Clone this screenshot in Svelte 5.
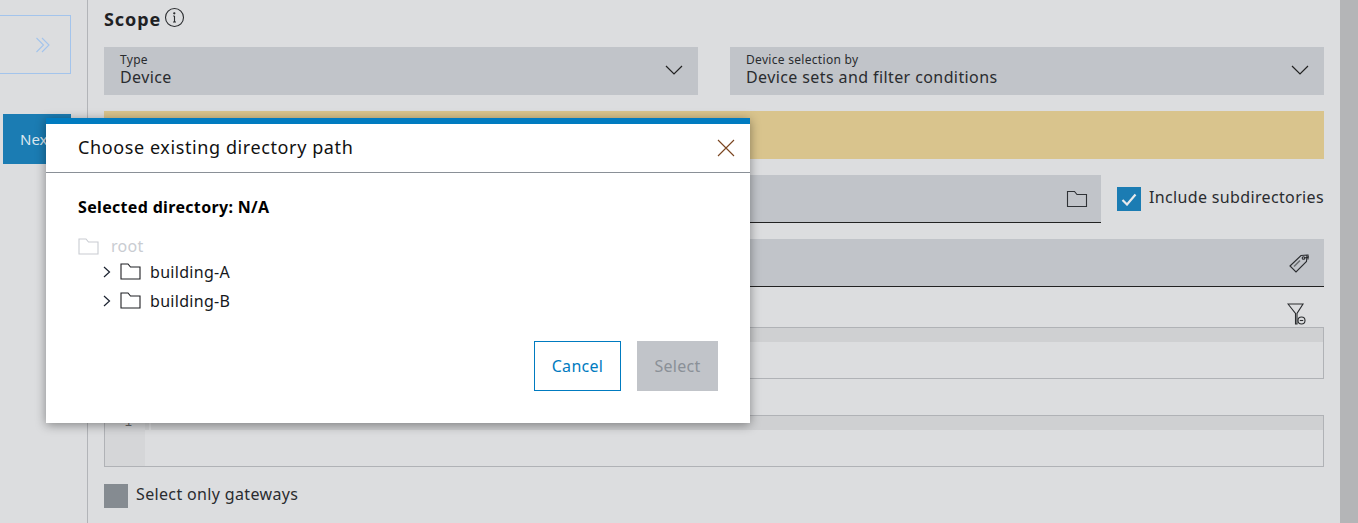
<script>
  const nodes = ['building-A', 'building-B'];
</script>

<div class="page">
  <aside class="side">
    <button class="expand" aria-label="Expand">
      <svg width="16" height="16" viewBox="0 0 16 16" fill="none" stroke="#a3c4ec" stroke-width="1.1"><path d="M1.500 1 8.500 8l-7 7M7 1l7 7-7 7"/></svg>
    </button>
    <button class="next">Next</button>
  </aside>

  <main class="main">
    <div class="content">
      <div class="title">
        <h2>Scope</h2>
        <svg class="info" width="21" height="21" viewBox="0 0 21 21" fill="none" stroke="#2a2c2f" stroke-width="1.100"><circle cx="10.500" cy="10.500" r="9"/><path d="M10.500 9v6M9 15h3M9.200 9h1.300"/><circle cx="10.300" cy="6.300" r=".6" fill="#2a2c2f"/></svg>
      </div>

      <div class="two">
        <div class="select">
          <div class="stack"><div class="lab">Type</div><div class="val">Device</div></div>
          <svg class="chev" width="18" height="10" viewBox="0 0 18 10" fill="none" stroke="#222" stroke-width="1.200"><path d="M1 1l8 8 8-8"/></svg>
        </div>
        <div class="select">
          <div class="stack"><div class="lab">Device selection by</div><div class="val">Device sets and filter conditions</div></div>
          <svg class="chev" width="18" height="10" viewBox="0 0 18 10" fill="none" stroke="#222" stroke-width="1.200"><path d="M1 1l8 8 8-8"/></svg>
        </div>
      </div>

      <div class="banner"></div>

      <div class="dirrow">
        <div class="input dir">
          <svg width="22" height="18" viewBox="0 0 22 18" fill="none" stroke="#2f3236" stroke-width="1.100"><path d="M1.500 16.500V1.500h7l2.500 3h9.500v12z"/></svg>
        </div>
        <label class="check">
          <span class="box"><svg width="16" height="13" viewBox="0 0 16 13" fill="none" stroke="#e8eaec" stroke-width="2.200"><path d="M1.500 7l4.500 4.500 8.500-10"/></svg></span>
          <span class="txt">Include subdirectories</span>
        </label>
      </div>

      <div class="input tag">
        <svg width="22" height="20" viewBox="0 0 22 20" fill="none" stroke="#2a2c2f" stroke-width="1.100"><path d="M1 13 12 2.500l6-.5-.5 6.500L7 19z"/><path d="M5 13.500l6-6" stroke="#6b6e72" stroke-width="1.600"/><circle cx="14.500" cy="5" r="1.300"/><path d="M15 5l5-1M19 1.500v5" /></svg>
      </div>

      <div class="filter">
        <svg width="20" height="23" viewBox="0 0 20 23" fill="none" stroke="#2a2c2f" stroke-width="1.100"><path d="M1 1h15l-6 9.500V21H8.500V10.500z"/><circle cx="14.500" cy="17.500" r="3.500" fill="#dcdddf"/><path d="M12.800 17.500h3.400"/></svg>
      </div>

      <div class="code first"><div class="codeline"></div></div>

      <div class="code second">
        <div class="gutter"><span>1</span></div>
        <div class="codeline"><span class="cursor"></span></div>
      </div>

      <label class="gate"><span class="off"></span><span class="txt">Select only gateways</span></label>
    </div>
    <div class="scroll"></div>
  </main>
</div>

<div class="modal">
  <header>
    <h3>Choose existing directory path</h3>
    <svg width="18" height="18" viewBox="0 0 18 18" stroke="#7a4520" stroke-width="1.100" fill="none"><path d="M1 1l16 16M17 1 1 17"/></svg>
  </header>
  <div class="body">
    <p class="sel">Selected directory: N/A</p>
    <div class="root">
      <svg width="21" height="17" viewBox="0 0 21 17" fill="none" stroke="#c9ccd2" stroke-width="1.100"><path d="M1 16V1h7l2.500 3h9.500v12z"/></svg>
      <span>root</span>
    </div>
    {#each nodes as n}
      <div class="node">
        <svg class="arrow" width="8" height="12" viewBox="0 0 8 12" fill="none" stroke="#1b2230" stroke-width="1.200"><path d="M1 1l5.500 5L1 11"/></svg>
        <svg width="21" height="17" viewBox="0 0 21 17" fill="none" stroke="#1f2024" stroke-width="1.100"><path d="M1 16V1h7l2.500 3h9.500v12z"/></svg>
        <span>{n}</span>
      </div>
    {/each}
    <div class="actions">
      <button class="cancel"><span>Cancel</span></button>
      <button class="select-btn" disabled><span>Select</span></button>
    </div>
  </div>
</div>

<style>
  :global(body) { margin: 0; background: #dcdddf; overflow: hidden; font-family: "Noto Sans", "Open Sans", sans-serif; color: #2a2c2f; }
  .page { display: flex; height: 523px; overflow: hidden; }
  .side { flex: none; border-right: 1px solid #b2b4b8; display: flex; flex-direction: column; align-items: flex-end; padding-top: 15px; box-sizing: border-box; width: 88px; }
  .side > button { margin-right: 16px; flex: none; font: inherit; }
  .expand { width: 100px; height: 59px; background: none; border: 1px solid #a3c4ec; display: flex; align-items: center; justify-content: flex-end; padding: 0 19px 0 0; box-sizing: border-box; }
  .next { width: 68px; height: 50px; margin-top: 40px; background: #1b7cb3; color: #dbe7ef; border: 0; font-size: 15px !important; text-align: left; padding: 0 0 0 17px; box-sizing: border-box; }
  .main { flex: 1; display: flex; padding-left: 16px; min-width: 0; }
  .content { width: 1220px; flex: none; margin-right: 16px; }
  .scroll { width: 18px; flex: none; background: #b4b5b7; }
  .title { display: flex; height: 47px; box-sizing: border-box; padding-top: 7px; align-items: flex-start; gap: 3px; }
  .title h2 { margin: 0; font-size: 18px; line-height: 25px; font-weight: 700; color: #1f2124; letter-spacing: .9px; }
  .two { display: grid; grid-template-columns: 594px 594px; gap: 32px; }
  .select { height: 48px; background: #c1c4c9; display: flex; justify-content: space-between; align-items: center; padding: 0 15px 0 16px; box-sizing: border-box; }
  .stack { margin-top: -3px; }
  .lab { font-size: 12px; line-height: 14px; letter-spacing: .3px; }
  .val { font-size: 16px; line-height: 20px; letter-spacing: .4px; }
  .chev { margin-top: -3px; }
  .banner { height: 48px; background: #d9c48d; margin-top: 16px; }
  .dirrow { display: flex; margin-top: 16px; gap: 16px; align-items: center; }
  .input { height: 48px; background: #c1c4c9; border-bottom: 1px solid #222; box-sizing: border-box; display: flex; align-items: center; justify-content: flex-end; }
  .dir { width: 997px; padding-right: 13px; }
  .check { display: flex; align-items: center; gap: 8px; font-size: 16px; letter-spacing: .35px; white-space: nowrap; }
  .txt { padding-bottom: 4px; }
  .box { width: 24px; height: 24px; background: #1b7cb3; display: flex; align-items: center; justify-content: center; }
  .tag { margin-top: 16px; padding-right: 13px; }
  .filter { height: 40px; display: flex; justify-content: flex-end; padding: 16px 17px 0 0; box-sizing: border-box; }
  .code { height: 52px; border: 1px solid #b0b2b6; box-sizing: border-box; display: flex; }
  .codeline { flex: 1; height: 14px; background: #cfd0d2; }
  .cursor { display: block; width: 2px; height: 14px; margin-left: 4px; background: #dadbdd; }
  .second { margin-top: 36px; }
  .gutter { width: 40px; background: #d5d6d8; font-family: "Liberation Mono", monospace; font-size: 12px; line-height: 15px; text-align: right; padding-right: 13px; box-sizing: border-box; color: #666; }
  .gate { display: flex; align-items: center; gap: 8px; margin-top: 16px; font-size: 16px; letter-spacing: .35px; }
  .off { width: 24px; height: 24px; background: #858b91; }

  .modal { position: absolute; left: 46px; top: 118px; width: 704px; height: 305px; background: #fff; border-top: 6px solid #007bc0; box-sizing: border-box; box-shadow: 0 2px 10px rgba(0,0,0,.4); color: #000; }
  .modal header { height: 48px; border-bottom: 1px solid #8a9097; display: flex; align-items: center; justify-content: space-between; padding: 0 15px 0 32px; }
  .modal h3 { margin: 0 0 2px; font-size: 18px; font-weight: 400; letter-spacing: .6px; color: #111; }
  .modal header svg { margin-bottom: 1px; }
  .body { padding: 0 32px; }
  .sel { margin: 24px 0 0; font-size: 16px; line-height: 20px; font-weight: 700; letter-spacing: .33px; }
  .root { display: flex; align-items: center; gap: 12px; margin-top: 18px; height: 22px; font-size: 16px; color: #c9ccd2; letter-spacing: .3px; }
  .node { display: flex; align-items: center; height: 29px; font-size: 16px; letter-spacing: .3px; padding-left: 25px; color: #16181c; }
  .arrow { margin-right: 9px; }
  .node span { margin-left: 9px; }
  .actions { display: flex; justify-content: flex-end; gap: 16px; margin-top: 26px; }
  .actions button { height: 50px; font: inherit; font-size: 16px; letter-spacing: .3px; box-sizing: border-box; padding: 0; }
  .cancel { width: 87px; background: #fff; color: #007bc0; border: 1px solid #007bc0; }
  .select-btn { width: 81px; background: #c1c4c9; color: #8a9097; border: 0; }
</style>
